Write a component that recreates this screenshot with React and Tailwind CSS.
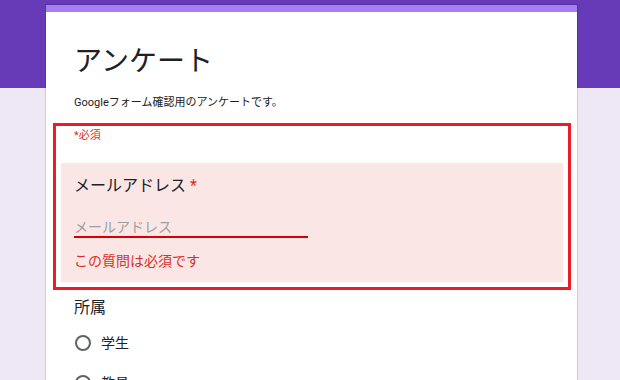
export default function App() {
  const font = { fontFamily: 'Roboto, "Noto Sans CJK JP", sans-serif' };
  return (
    <div
      className="relative w-[620px] h-[380px] overflow-hidden bg-[#ede7f6] font-['Roboto','Noto_Sans_CJK_JP',sans-serif]"
      style={font}
    >
      <div className="absolute inset-x-0 top-0 h-[88px] bg-[#673ab7]" />
      <div className="relative ml-[46px] mt-[5px] w-[531px] h-[400px] bg-white shadow-[0_0_0_1px_rgba(0,0,0,0.12)]">
        <div className="h-[7px] bg-[#a47ef2]" />
        <div className="px-[28px] pt-[30px]">
          <div className="text-[28px] leading-[40px] text-[#202124]">アンケート</div>
          <div className="mt-[13px] text-[11px] leading-[16px] text-[#202124]">
            Googleフォーム確認用のアンケートです。
          </div>
        </div>
        <div className="mt-[12px] ml-[7px] w-[518px] border-[3px] border-[#ed1c24]">
          <div className="pl-[18px] pt-[3px] text-[11px] leading-[14px] text-[#d93025]">*必須</div>
          <div className="mx-[5px] mt-[20px] mb-[5px] bg-[#fae7e5] pl-[13px] pt-[11px] pb-[11px]">
            <div className="text-[16px] leading-[24px] text-[#202124]">
              メールアドレス<span className="ml-[4px] text-[#d93025]">*</span>
            </div>
            <div className="mt-[20px] w-[234px] border-b-2 border-[#d50000] text-[14px] leading-[18px] text-[#9e9e9e]">
              メールアドレス
            </div>
            <div className="mt-[13px] text-[14px] leading-[20px] text-[#d93025]">この質問は必須です</div>
          </div>
        </div>
        <div className="px-[28px]">
          <div className="mt-[6px] text-[16px] leading-[24px] text-[#202124]">所属</div>
          <div className="mt-[11px] flex flex-col gap-[16px]">
            {['学生', '教員'].map((t) => (
              <div key={t} className="flex items-center h-[24px]">
                <div className="ml-[1px] w-[16px] h-[16px] rounded-full border-2 border-[#5f6368]" />
                <div className="ml-[10px] text-[14px] leading-[24px] text-[#202124]">{t}</div>
              </div>
            ))}
          </div>
        </div>
      </div>
    </div>
  );
}
